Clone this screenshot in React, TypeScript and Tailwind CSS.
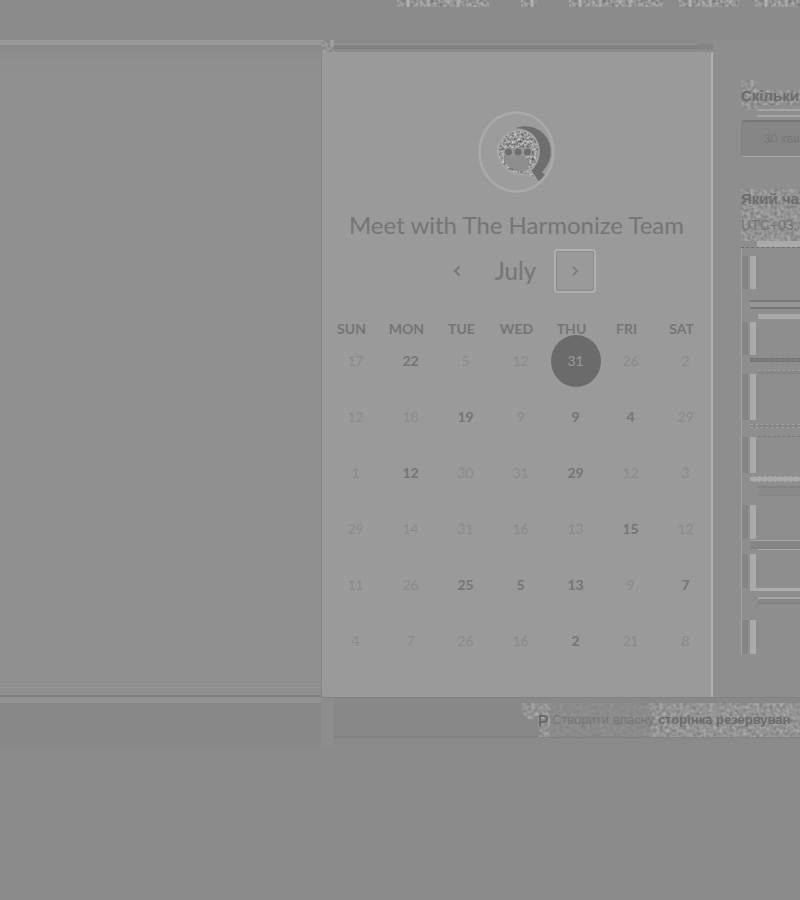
import React from "react";

const weekdays = ["SUN", "MON", "TUE", "WED", "THU", "FRI", "SAT"];

type Day = { n: number; open?: boolean; selected?: boolean };

const weeks: Day[][] = [
  [{ n: 17 }, { n: 22, open: true }, { n: 5 }, { n: 12 }, { n: 31, selected: true }, { n: 26 }, { n: 2 }],
  [{ n: 12 }, { n: 18 }, { n: 19, open: true }, { n: 9 }, { n: 9, open: true }, { n: 4, open: true }, { n: 29 }],
  [{ n: 1 }, { n: 12, open: true }, { n: 30 }, { n: 31 }, { n: 29, open: true }, { n: 12 }, { n: 3 }],
  [{ n: 29 }, { n: 14 }, { n: 31 }, { n: 16 }, { n: 13 }, { n: 15, open: true }, { n: 12 }],
  [{ n: 11 }, { n: 26 }, { n: 25, open: true }, { n: 5, open: true }, { n: 13, open: true }, { n: 9 }, { n: 7, open: true }],
  [{ n: 4 }, { n: 7 }, { n: 26 }, { n: 16 }, { n: 2, open: true }, { n: 21 }, { n: 8 }],
];

type Slot = { box: string; top: string; bar: string; rule: string };

// box: block height, top: strip above the bar, bar: light bar height, rule: lines that close the slot.
const slots: Slot[] = [
  { box: "h-[61px]", top: "h-2", bar: "h-[33px]", rule: "h-[9px] border-y-2 border-[#787878] bg-[#969696]" },
  { box: "h-[53px]", top: "mt-[5px] h-[5px] bg-[#a9a9a9]", bar: "mt-[3px] h-[33px]", rule: "h-1 border-y border-dashed border-[#707070] bg-[#7c7c7c]" },
  { box: "h-[66px]", top: "mt-2 h-1 border-t border-dashed border-[#a0a0a0] bg-[#868686]", bar: "h-[46px]", rule: "h-1 border-y border-dashed border-[#a0a0a0] bg-[#868686]" },
  { box: "h-[54px]", top: "mt-2 h-px border-t border-dashed border-[#787878]", bar: "h-[36px]", rule: "h-[6px] border-y border-dashed border-[#8e8e8e] bg-[#a9a9a9]" },
  { box: "h-[67px]", top: "mt-1 h-[10px] border-y-2 border-t-[#828282] border-b-[#868686] bg-[#8c8c8c]", bar: "mt-[9px] h-[34px]", rule: "h-[9px] border-t border-b-2 border-t-[#a5a5a5] border-b-[#828282] bg-[#868686]" },
  { box: "h-[42px]", top: "h-px bg-[#aaaaaa]", bar: "mt-1 h-[34px]", rule: "h-[3px] bg-[#aaaaaa]" },
  { box: "h-[64px]", top: "mt-[6px] h-[7px] border-t-2 border-b border-t-[#a5a5a5] border-b-[#7c7c7c] bg-[#888888]", bar: "mt-4 h-[34px]", rule: "h-0" },
];

function Grain({ id, soft = false }: { id: string; soft?: boolean }) {
  return (
    <svg aria-hidden="true" className="absolute inset-0 h-full w-full" preserveAspectRatio="none">
      <filter id={id} x="0" y="0" width="100%" height="100%" colorInterpolationFilters="sRGB">
        <feTurbulence type="fractalNoise" baseFrequency="0.3" numOctaves="1" seed="4" />
        <feColorMatrix
          values={
            soft
              ? "0.3 0 0 0 0.43  0.3 0 0 0 0.43  0.3 0 0 0 0.43  0 0 0 0 1"
              : "0.5 0 0 0 0.34  0.5 0 0 0 0.34  0.5 0 0 0 0.34  0 0 0 0 1"
          }
        />
      </filter>
      <rect width="100%" height="100%" filter={`url(#${id})`} />
    </svg>
  );
}

function Logo() {
  return (
    <svg viewBox="0 0 80 82" className="h-[82px] w-20" aria-hidden="true">
      <defs>
        <filter id="logo-grain" x="0" y="0" width="100%" height="100%" colorInterpolationFilters="sRGB">
          <feTurbulence type="fractalNoise" baseFrequency="0.4" numOctaves="2" seed="8" result="n" />
          <feColorMatrix in="n" values="0.7 0 0 0 0.24  0.7 0 0 0 0.24  0.7 0 0 0 0.24  0 0 0 0 1" />
          <feComposite in2="SourceGraphic" operator="in" />
        </filter>
      </defs>
      <ellipse cx="39.500" cy="41" rx="37" ry="39.500" fill="#9c9c9c" stroke="#aaaaaa" strokeWidth="2.500" />
      <path d="M39 17C49 13 63 16 70 27C77 39 74 52 65 61L68 64L62 70L53 61C67 50 66 28 51 20C47 18 43 17 39 17Z" fill="#6e6e6e" />
      <path d="M42 19C54 19 62 28 62 40C62 50 57 56 54 59L60 68L50 64C34 66 20 56 20 41C20 28 30 19 42 19Z" fill="#a6a6a6" />
      <path filter="url(#logo-grain)" d="M42 20C53 20 61 28 61 40C61 50 56 56 52 60L57 66L50 63C34 64 22 55 22 41C22 29 31 20 42 20Z" />
      <path d="M29 45H48L52 53L48 60C38 61 30 56 28 49Z" fill="#8e8e8e" />
      <path d="M27 37H55V45H27Z" fill="#969696" />
      <circle cx="31.500" cy="41" r="3.500" fill="#6e6e6e" />
      <circle cx="41" cy="41" r="3.500" fill="#6e6e6e" />
      <circle cx="50.500" cy="41" r="3.500" fill="#6e6e6e" />
    </svg>
  );
}

function Chevron({ left = false }: { left?: boolean }) {
  return (
    <svg viewBox="0 0 10 14" className="h-[14px] w-[10px]" fill="none" stroke="currentColor" strokeWidth={left ? 2 : 1.5} aria-hidden="true">
      <path d={left ? "M7.500 2.500L3 7L7.500 11.500" : "M3 2.500L7 7L3 11.500"} />
    </svg>
  );
}

function Calendar() {
  return (
    <table className="ml-[2px] w-[385px] table-fixed border-collapse">
      <thead>
        <tr className="h-2">
          {weekdays.map((d) => (
            <th key={d} scope="col" className="p-0 text-center text-sm leading-2 font-bold text-[#757575]">{d}</th>
          ))}
        </tr>
      </thead>
      <tbody>
        {weeks.map((week, i) => (
          <tr key={i} className="h-14">
            {week.map((day, j) => (
              <td key={j} className="p-0 pl-2 text-center">
                <button
                  className={
                    day.selected
                      ? "-mx-1 h-[52px] w-[50px] rounded-[50%] bg-[#6b6b6b] text-sm text-[#9a9a9a]"
                      : day.open
                        ? "h-10 w-10 text-sm font-bold text-[#757575]"
                        : "h-10 w-10 text-sm text-[#8b8b8b]"
                  }
                >
                  {day.n}
                </button>
              </td>
            ))}
          </tr>
        ))}
      </tbody>
    </table>
  );
}

export default function App() {
  return (
    <div className="min-h-screen overflow-hidden bg-[#8b8b8b] font-['Lato',sans-serif]">
      <header className="flex h-10 items-start gap-8 pl-[397px]">
        <div className="relative h-[7px] w-[92px] shrink-0"><Grain id="g1" /></div>
        <div className="relative h-[7px] w-4 shrink-0"><Grain id="g2" /></div>
        <div className="relative h-[7px] w-[94px] shrink-0"><Grain id="g3" /></div>
        <div className="relative -ml-4 h-[7px] w-[60px] shrink-0"><Grain id="g4" /></div>
        <div className="relative -ml-4 h-[7px] min-w-0 flex-1"><Grain id="g5" /></div>
      </header>

      <main className="grid grid-cols-[minmax(0,321fr)_392px_minmax(0,87fr)]">
        <div className="flex flex-col">
          <div className="h-[6px] border-b border-[#878787] bg-[#999999]" />
          <div className="h-6 bg-gradient-to-b from-[#8b8b8b] to-[#909090]" />
          <div className="flex-1 bg-[#909090]" />
          <div className="h-[10px] border-t border-b-2 border-t-[#969696] border-b-[#808080] bg-[#8f8f8f]" />
        </div>

        <section>
          <div className="flex h-3">
            <div className="relative h-3 w-[13px]"><Grain id="g6" soft /></div>
            <div className="mt-1 h-[5px] flex-1 border-y border-t-[#949494] border-b-[#7c7c7c] bg-[#828282]" />
            <div className="mt-1 h-[5px] w-4 bg-[#838383]" />
          </div>
          <div className="h-[645px] border-r-2 border-l border-r-[#b0b0b0] border-l-[#858585] bg-[#9a9a9a]">
            <div className="flex flex-col items-center pt-[59px]">
              <Logo />
              <h1 className="mt-4 text-2xl leading-8 whitespace-nowrap text-[#757575]">Meet with The Harmonize Team</h1>
              <div className="mt-2 flex h-11 items-center text-[#777777]">
                <button aria-label="Previous month" className="flex h-11 w-10 items-center justify-center"><Chevron left /></button>
                <h2 className="w-[77px] text-center text-2xl font-medium">July</h2>
                <button aria-label="Next month" className="flex h-11 w-[42px] items-center justify-center rounded-[4px] border-2 border-[#b0b0b0] outline outline-1 -outline-offset-3 outline-[#8a8a8a]"><Chevron /></button>
              </div>
            </div>
            <div className="pt-8"><Calendar /></div>
          </div>
        </section>

        <aside className="overflow-hidden bg-[#8e8e8e] pt-10 pl-7 font-['Liberation_Sans',sans-serif] whitespace-nowrap">
          <div className="relative h-[29px]">
            <div className="absolute inset-y-0 left-0 w-4"><Grain id="g7" soft /></div>
            <div className="absolute top-[10px] right-0 bottom-1 left-4"><Grain id="g12" soft /></div>
            <h2 className="relative pt-1 text-[15px] leading-6 font-bold text-[#6c6c6c]">Скільки</h2>
          </div>
          <div className="ml-4 h-2 border-y-2 border-[#a6a6a6]" />
          <button className="mt-[3px] block h-[37px] w-full rounded-l border-t-2 border-b border-l border-t-[#777777] border-b-[#aaaaaa] border-l-[#828282] bg-[#868686] pl-[22px] text-left text-xs text-[#777777]">30 хви</button>
          <div className="relative mt-8 h-[52px]">
            <div className="absolute inset-0"><Grain id="g8" soft /></div>
            <h2 className="relative text-[15px] leading-5 font-bold text-[#6c6c6c]">Який ча</h2>
            <p className="relative pt-1 text-sm leading-6 text-[#747474]">UTC+03:</p>
          </div>
          <div className="ml-4 h-[6px] bg-[#aaaaaa]" />
          <div className="border-t border-dashed border-[#6f6f6f]">
            {slots.map((slot, i) => (
              <button key={i} aria-label={`Time slot ${i + 1}`} className={`flex w-full flex-col border-l border-[#a4a4a4] ${slot.box}`}>
                <span className={`ml-4 block shrink-0 self-stretch ${slot.top}`} />
                <span className={`block w-[14px] shrink-0 border-r-[6px] border-l-[6px] border-l-[#858585] border-r-[#aaaaaa] ${slot.bar}`} />
                <span className={`mt-auto ml-2 block shrink-0 self-stretch ${slot.rule}`} />
              </button>
            ))}
          </div>
        </aside>
      </main>

      <footer className="grid grid-cols-[minmax(0,321fr)_minmax(0,479fr)]">
        <div className="h-[50px] border-t-[6px] border-[#939393] bg-[#888888]" />
        <div className="flex h-[50px] border-t border-[#818181] bg-[#8a8a8a]">
          <div className="w-[13px] shrink-0 bg-[#8d8d8d]" />
          <div className="h-10 min-w-0 flex-1 border-b-2 border-[#828282] bg-[#888888] pt-[5px] pl-[188px]">
            <div className="relative h-[34px] overflow-hidden font-['Liberation_Sans',sans-serif] text-[13px] leading-[34px] whitespace-nowrap">
              <div className="absolute top-0 left-0 h-4 w-7"><Grain id="g9" soft /></div>
              <div className="absolute bottom-0 left-4 h-[18px] w-3"><Grain id="g13" soft /></div>
              <div className="absolute inset-y-0 left-7 w-[100px] opacity-30"><Grain id="g11" soft /></div>
              <div className="absolute inset-y-0 right-0 left-32"><Grain id="g10" soft /></div>
              <a href="#create" className="relative flex items-center gap-1 pl-4 text-[#777777]">
                <svg viewBox="0 0 10 12" className="h-3 w-[10px] shrink-0" fill="none" stroke="#696969" strokeWidth="2" aria-hidden="true"><path d="M2 12V2H6A3 3 0 0 1 6 8H2" /></svg>
                <span>Створити власну <b className="text-[#6c6c6c]">сторінка резервуван</b></span>
              </a>
            </div>
          </div>
        </div>
      </footer>
    </div>
  );
}
